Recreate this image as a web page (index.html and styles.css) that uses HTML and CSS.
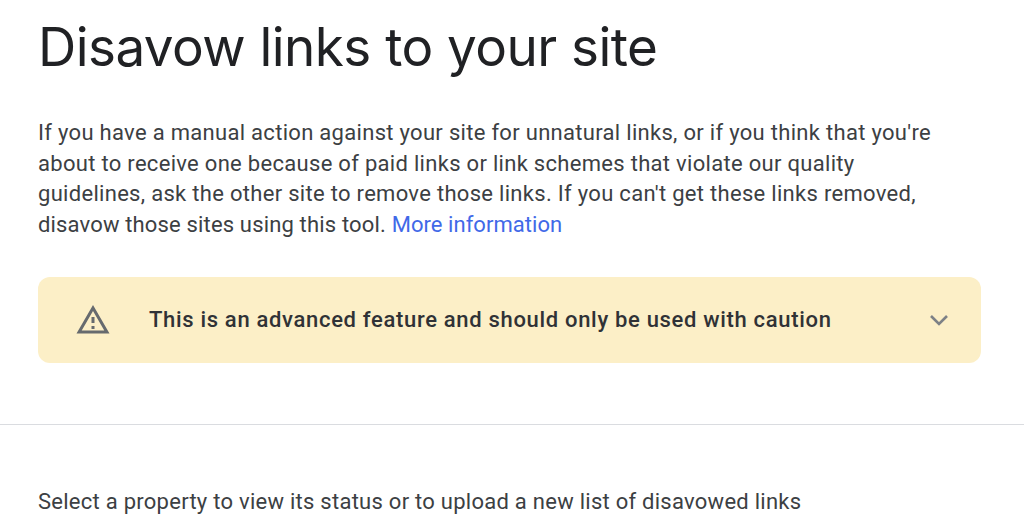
FILE: index.html
```html
<!DOCTYPE html>
<html lang="en">
<head>
    <meta charset="UTF-8">
    <title>Disavow links</title>
    <link rel="stylesheet" href="styles.css">
</head>
<body>
    <div class="container">
        <h1>Disavow links to your site</h1>

        <p class="intro">If you have a manual action against your site for unnatural links, or if you think that you're<br>about to receive one because of paid links or link schemes that violate our quality<br>guidelines, ask the other site to remove those links. If you can't get these links removed,<br><span class="intro-end">disavow those sites using this tool.</span> <a href="#">More information</a></p>

        <div class="warning">
            <svg class="warning-icon" viewBox="0 0 24 24" width="36" height="36">
                <path d="M12 5.99 19.53 19H4.47L12 5.99M12 2 1 21h22L12 2zm1 14h-2v2h2v-2zm0-6h-2v4h2v-4z"/>
            </svg>
            <span class="warning-text">This is an advanced feature and should only be used with caution</span>
            <svg class="chevron" viewBox="0 0 20 12" width="20" height="12">
                <path d="M2 2l8 8 8-8"/>
            </svg>
        </div>
    </div>

    <hr class="divider">

    <div class="container">
        <p class="select-text">Select a property to view its status or to upload a new list of disavowed links</p>
    </div>
</body>
</html>
```

FILE: styles.css
```css
* {
    margin: 0;
    padding: 0;
    box-sizing: border-box;
}

html, body {
    height: 531px;
    overflow: hidden;
}

body {
    background-color: #fff;
    color: #202124;
    font-family: 'Roboto', sans-serif;
}

.container {
    padding: 0 43px 0 38px;
}

h1 {
    font-family: 'Inter', sans-serif;
    font-weight: 400;
    font-size: 53px;
    line-height: 64px;
    letter-spacing: -0.55px;
    padding-top: 15px;
    margin-bottom: 39px;
}

.intro {
    font-size: 22px;
    line-height: 30.5px;
    letter-spacing: 0.3px;
    color: #3c4043;
    margin-bottom: 37px;
}

.intro-end {
    letter-spacing: 0.16px;
}

.intro a {
    color: #4169e8;
    text-decoration: none;
    letter-spacing: 0.05px;
}

.warning {
    display: flex;
    align-items: center;
    height: 86px;
    background-color: #fcefc7;
    border-radius: 12px;
    padding: 0 32px 0 37px;
}

.warning-icon {
    fill: #666a6e;
    flex-shrink: 0;
}

.warning-text {
    flex: 1;
    margin-left: 38px;
    margin-bottom: 2px;
    font-size: 22px;
    font-weight: 500;
    letter-spacing: 0.68px;
    color: #303236;
}

.chevron {
    fill: none;
    stroke: #7d8186;
    stroke-width: 2.6;
}

.divider {
    border: none;
    border-top: 1px solid #dadce0;
    margin-top: 61px;
    margin-bottom: 62px;
}

.select-text {
    font-size: 22px;
    line-height: 30px;
    letter-spacing: 0.26px;
    color: #3c4043;
}
```
